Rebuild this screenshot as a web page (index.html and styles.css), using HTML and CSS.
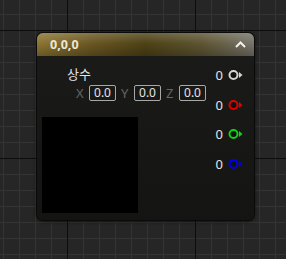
FILE: index.html
```html
<!DOCTYPE html>
<html lang="ko">
<head>
  <meta charset="UTF-8">
  <title>상수 노드</title>
  <link rel="stylesheet" href="styles.css">
</head>
<body>
  <div class="canvas">
    <div class="node">
      <div class="node-header">
        <span class="node-title">0,0,0</span>
        <svg class="collapse" width="11" height="7" viewBox="0 0 11 7">
          <polyline points="1,6 5.5,1.5 10,6" fill="none" stroke="#f2f2f2" stroke-width="2"/>
        </svg>
      </div>
      <div class="node-body">
        <div class="inputs">
          <div class="label">상수</div>
          <div class="vector-row">
            <div class="field"><span class="axis">X</span><span class="value">0.0</span></div>
            <div class="field"><span class="axis">Y</span><span class="value">0.0</span></div>
            <div class="field"><span class="axis">Z</span><span class="value">0.0</span></div>
          </div>
          <div class="preview"></div>
        </div>
        <div class="outputs">
          <div class="pin-row">
            <span>0</span>
            <svg width="15" height="12" viewBox="0 0 15 12"><circle cx="5.5" cy="6" r="4" fill="#111" stroke="#d4d4d4" stroke-width="2"/><polygon points="11,3 14.5,6 11,9" fill="#d4d4d4"/></svg>
          </div>
          <div class="pin-row">
            <span>0</span>
            <svg width="15" height="12" viewBox="0 0 15 12"><circle cx="5.5" cy="6" r="4" fill="#111" stroke="#e00000" stroke-width="2"/><polygon points="11,3 14.5,6 11,9" fill="#e00000"/></svg>
          </div>
          <div class="pin-row">
            <span>0</span>
            <svg width="15" height="12" viewBox="0 0 15 12"><circle cx="5.5" cy="6" r="4" fill="#111" stroke="#12d012" stroke-width="2"/><polygon points="11,3 14.5,6 11,9" fill="#12d012"/></svg>
          </div>
          <div class="pin-row">
            <span>0</span>
            <svg width="15" height="12" viewBox="0 0 15 12"><circle cx="5.5" cy="6" r="4" fill="#111" stroke="#0000ee" stroke-width="2"/><polygon points="11,3 14.5,6 11,9" fill="#0000ee"/></svg>
          </div>
        </div>
      </div>
    </div>
  </div>
</body>
</html>
```

FILE: styles.css
```css
:root {
  --bg-canvas: #262626;
  --grid-minor: #343434;
  --grid-major: #0d0d0d;
  --text-main: #e4e4e4;
  --text-dim: #666;
}

* {
  box-sizing: border-box;
}

body {
  margin: 0;
  font-family: "Noto Sans", "Noto Sans CJK KR", sans-serif;
  color: var(--text-main);
  overflow: hidden;
}

.canvas {
  position: relative;
  width: 286px;
  height: 259px;
  background-color: var(--bg-canvas);
  background-image:
    linear-gradient(to right, var(--grid-major) 1px, transparent 1px),
    linear-gradient(to bottom, var(--grid-major) 1px, transparent 1px),
    linear-gradient(to right, var(--grid-minor) 1px, transparent 1px),
    linear-gradient(to bottom, var(--grid-minor) 1px, transparent 1px);
  background-size: 128px 128px, 128px 128px, 16px 16px, 16px 16px;
  background-position: 67px 0, 0 30px, 3px 0, 0 14px;
}

.node {
  position: absolute;
  left: 37px;
  top: 33px;
  width: 217px;
  height: 187px;
  border-radius: 6px;
  background: linear-gradient(to bottom, #1b1c1a, #141513);
  box-shadow: 0 0 0 1px #0a0a0a, 0 1px 4px rgba(0,0,0,0.8);
  overflow: hidden;
}

.node-header {
  height: 23px;
  display: flex;
  align-items: center;
  justify-content: space-between;
  padding: 0 8px 0 13px;
  background:
    linear-gradient(to bottom, rgba(255,255,255,0.18), rgba(255,255,255,0) 45%, rgba(0,0,0,0.25)),
    linear-gradient(to right, #8c7632 0%, #6a5722 25%, #4e4216 50%, #5d5431 75%, #77746a 100%);
}

.node-title {
  font-size: 12.5px;
  font-weight: bold;
  color: #ece6d6;
}

.collapse {
  display: block;
}

.node-body {
  display: flex;
  justify-content: space-between;
}

.inputs {
  padding: 10px 0 7px 5px;
}

.label {
  height: 16px;
  line-height: 16px;
  margin-left: 25px;
  font-size: 13px;
}

.vector-row {
  display: flex;
  height: 16px;
  gap: 5px;
  margin-top: 3px;
  padding-left: 34px;
}

.field {
  display: flex;
  align-items: center;
  gap: 4px;
}

.axis {
  font-size: 13px;
  line-height: 16px;
  color: var(--text-dim);
  width: 9px;
}

.value {
  width: 27px;
  height: 16px;
  line-height: 14px;
  border: 1px solid #a8a8a8;
  border-radius: 2px;
  font-size: 12px;
  text-align: center;
}

.preview {
  width: 96px;
  height: 96px;
  margin-top: 16px;
  background-color: #000;
}

.outputs {
  display: flex;
  flex-direction: column;
  gap: 13.7px;
  padding: 11px 11px 0 0;
}

.pin-row {
  height: 16px;
  display: flex;
  align-items: center;
  gap: 5px;
  font-size: 13px;
}

.pin-row svg {
  display: block;
}
```
